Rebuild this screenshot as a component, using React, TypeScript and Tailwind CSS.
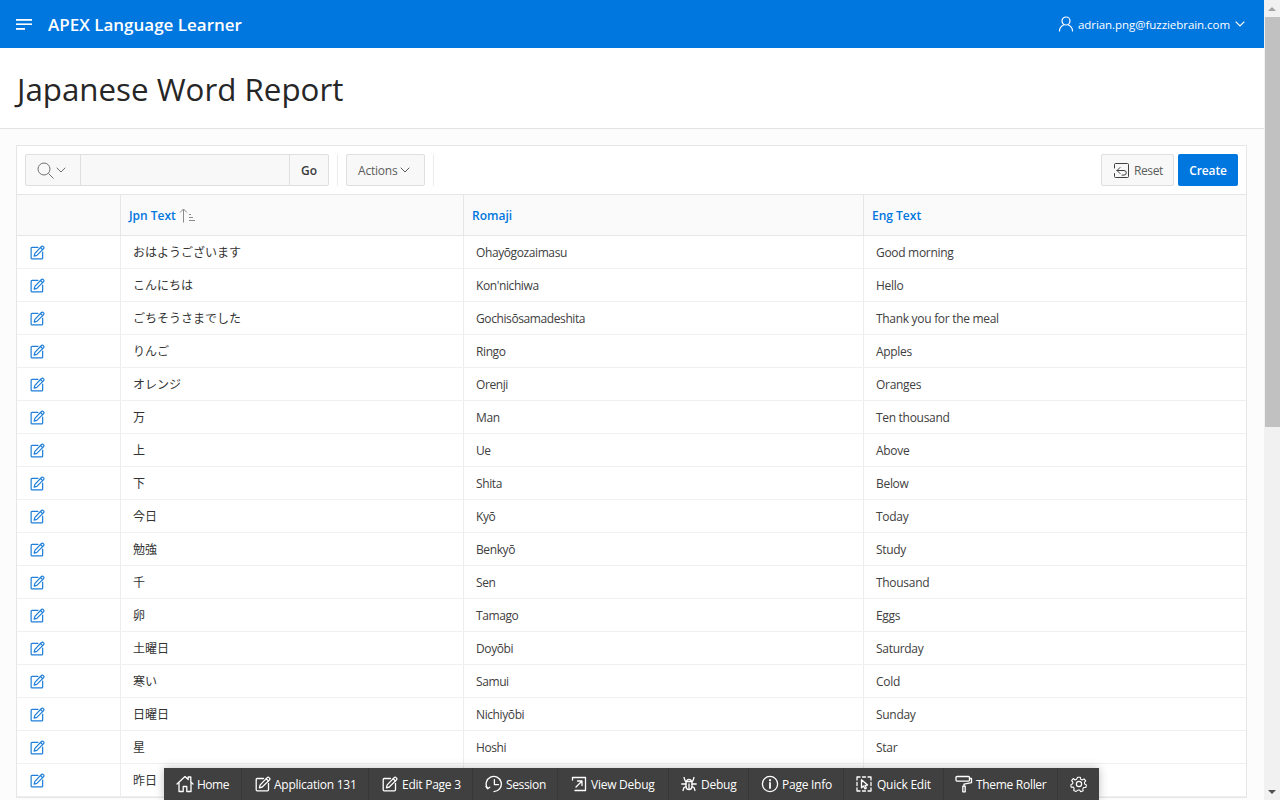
import React from "react";

const rows: [string, string, string][] = [
  ["おはようございます", "Ohayōgozaimasu", "Good morning"],
  ["こんにちは", "Kon'nichiwa", "Hello"],
  ["ごちそうさまでした", "Gochisōsamadeshita", "Thank you for the meal"],
  ["りんご", "Ringo", "Apples"],
  ["オレンジ", "Orenji", "Oranges"],
  ["万", "Man", "Ten thousand"],
  ["上", "Ue", "Above"],
  ["下", "Shita", "Below"],
  ["今日", "Kyō", "Today"],
  ["勉強", "Benkyō", "Study"],
  ["千", "Sen", "Thousand"],
  ["卵", "Tamago", "Eggs"],
  ["土曜日", "Doyōbi", "Saturday"],
  ["寒い", "Samui", "Cold"],
  ["日曜日", "Nichiyōbi", "Sunday"],
  ["星", "Hoshi", "Star"],
  ["昨日", "", ""],
];

const S = { fill: "none", stroke: "currentColor", strokeLinecap: "round" as const, strokeLinejoin: "round" as const };

function EditIcon({ size = 15, sw = 1.3 }: { size?: number; sw?: number }) {
  return (
    <svg width={size} height={size} viewBox="0 0 16 16" {...S} strokeWidth={sw}>
      <path d="M8.5 2.5H2.2a1 1 0 0 0-1 1v10.3a1 1 0 0 0 1 1h10.3a1 1 0 0 0 1-1V7.5" />
      <path d="M5.2 8.9 12.2 1.6a1.3 1.3 0 0 1 1.9 0l.4.4a1.3 1.3 0 0 1 0 1.9L7.3 11l-2.9.8z" />
      <path d="M11.2 2.7l2.3 2.3" />
    </svg>
  );
}

const icons: Record<string, React.ReactNode> = {
  home: (
    <svg width="18" height="18" viewBox="0 0 18 18" {...S} strokeWidth={1.3}>
      <path d="M1 9 9 1.6l3.2 2.9V2h2.6v5L17 9" />
      <path d="M3 8v8.5h4.2v-5h3.6v5H15V8" />
    </svg>
  ),
  edit: <EditIcon size={16} sw={1.3} />,
  session: (
    <svg width="18" height="18" viewBox="0 0 18 18" {...S} strokeWidth={1.3}>
      <path d="M2.6 13.5A7.6 7.6 0 1 1 9 16.6" />
      <path d="M9.4 4.6V9.6H13.5" />
      <path d="M1 11.6l1.6 2 2.2-1.4" />
    </svg>
  ),
  view: (
    <svg width="16" height="16" viewBox="0 0 16 16" {...S} strokeWidth={1.3}>
      <path d="M1.5 4V1.5h13v13H4" />
      <path d="M5 11 11 5M6.5 5H11v4.5" />
    </svg>
  ),
  debug: (
    <svg width="16" height="16" viewBox="0 0 16 16" {...S} strokeWidth={1.3}>
      <path d="M5 5.5h6v5a3 3 0 0 1-6 0z" />
      <path d="M5.8 5.5a2.2 2.2 0 0 1 4.4 0M8 8v5.4M3 1.5l1 3 1 1M13 1.5l-1 3-1 1M.8 8H5M15.2 8H11M2 14.5l1-3 2-.8M14 14.5l-1-3-2-.8" />
    </svg>
  ),
  info: (
    <svg width="18" height="18" viewBox="0 0 18 18" {...S} strokeWidth={1.3}>
      <circle cx="9" cy="9" r="7.6" />
      <path d="M9 8v5" strokeWidth={1.8} />
      <path d="M9 5v.6" strokeWidth={2} />
    </svg>
  ),
  quick: (
    <svg width="16" height="16" viewBox="0 0 16 16" {...S} strokeWidth={1.3}>
      <path d="M1 4V1h3M12 1h3v3M15 12v3h-3M4 15H1v-3M1 6.5v3M15 6.5v3M6.5 1h3M6.5 15h3" />
      <path d="M5.5 3.8v8l2-1.8 1.4 2.8 1.4-.7L9 9.3l2.6-.3z" />
    </svg>
  ),
  roller: (
    <svg width="18" height="18" viewBox="0 0 18 18" {...S} strokeWidth={1.3}>
      <path d="M1 3.5V2.5a1 1 0 0 1 1-1h11.5a1 1 0 0 1 1 1v2.6a1 1 0 0 1-1 1H2a1 1 0 0 1-1-1z" />
      <path d="M14.5 3.5h2v4.2L9 9.2v2" />
      <path d="M7.8 11.2h2.4v5.6H7.8z" />
    </svg>
  ),
};

const toolbar: [string, string, string, string, string][] = [
  ["Home", "home", "w-[78px]", "pl-[12px] gap-[3px]", "tracking-[-0.5px]"],
  ["Application 131", "edit", "w-[127px]", "pl-[13px] gap-[3px]", "tracking-[-0.25px]"],
  ["Edit Page 3", "edit", "w-[104px]", "pl-[13px] gap-[4px]", "tracking-[-0.25px]"],
  ["Session", "session", "w-[85px]", "pl-[12px] gap-[3px]", "tracking-[-0.35px]"],
  ["View Debug", "view", "w-[111px]", "pl-[13px] gap-[4px]", "tracking-[-0.25px]"],
  ["Debug", "debug", "w-[80px]", "pl-[12px] gap-[4px]", "tracking-[-0.25px]"],
  ["Page Info", "info", "w-[95px]", "pl-[12px] gap-[3px]", "tracking-[-0.25px]"],
  ["Quick Edit", "quick", "w-[100px]", "pl-[12px] gap-[5px]", "tracking-[-0.25px]"],
  ["Theme Roller", "roller", "w-[114px]", "pl-[11px] gap-[3px]", "tracking-[-0.3px]"],
];

export default function App() {
  return (
    <div className="flex h-screen w-[1280px] overflow-hidden bg-white text-[#262626] font-['Open_Sans','Noto_Sans_CJK_JP',sans-serif]">
      <div className="relative flex w-[1264px] flex-col overflow-hidden">
        <header className="flex h-12 shrink-0 items-center bg-[#0076df] text-white">
          <svg className="ml-4" width="16" height="12" viewBox="0 0 16 12" fill="currentColor">
            <rect x="0" y="1" width="16" height="1.8" />
            <rect x="0" y="5.4" width="16" height="1.6" />
            <rect x="0" y="10" width="9" height="1.8" />
          </svg>
          <span className="ml-4 pt-[2px] text-[17px] font-semibold">APEX Language Learner</span>
          <div className="ml-auto flex items-center pr-[19px] text-[11.5px]">
            <svg width="16" height="16" viewBox="0 0 16 16" fill="none" stroke="currentColor" strokeWidth="1.2">
              <circle cx="8" cy="5" r="4" />
              <path d="M1.5 15c0-3.5 2-5 4-6M14.5 15c0-3.5-2-5-4-6" strokeLinecap="round" />
            </svg>
            <span className="ml-[4px] pt-[2px] tracking-[-0.05px]">adrian.png@fuzziebrain.com</span>
            <svg className="ml-[5px]" width="10" height="6" viewBox="0 0 10 6" fill="none" stroke="currentColor" strokeWidth="1.2">
              <path d="M.7.7 5 5 9.3.7" />
            </svg>
          </div>
        </header>

        <div className="flex h-[81px] shrink-0 items-center border-b border-[#e3e3e3] pl-[17px]">
          <h1 className="mt-1 text-[31.3px] font-normal leading-none">Japanese Word Report</h1>
        </div>

        <main className="flex-1 bg-[#fcfcfc] pl-4 pr-[17px] pt-4">
          <div className="border border-[#e6e6e6] bg-white">
            <div className="flex h-[49px] items-center border-b border-[#e6e6e6] bg-white px-2">
              <div className="flex h-8 w-[304px] rounded-[2px] border border-[#dfdfdf] bg-[#f8f8f8]">
                <div className="flex w-[55px] items-center gap-[2px] border-r border-[#dfdfdf] pl-[11px] text-[#707070]">
                  <svg width="17" height="17" viewBox="0 0 17 17" fill="none" stroke="currentColor" strokeWidth="1">
                    <circle cx="7" cy="7" r="6" />
                    <path d="m11.5 11.5 5 5" />
                  </svg>
                  <svg width="10" height="6" viewBox="0 0 10 6" fill="none" stroke="currentColor" strokeWidth="1">
                    <path d="M.7.7 5 5 9.3.7" />
                  </svg>
                </div>
                <div className="flex-1" />
                <div className="flex w-[39px] items-center justify-center border-l border-[#dfdfdf] pt-[1px] text-[12px] font-semibold text-[#3a3a3a]">Go</div>
              </div>
              <div className="mx-2 h-8 w-px bg-[#ececec]" />
              <div className="flex h-8 w-[79px] items-center gap-[2px] rounded-[2px] border border-[#dfdfdf] bg-[#f8f8f8] pl-[11px] text-[12px] tracking-[-0.2px] text-[#5c5c5c]">
                <span className="pt-[2px]">Actions</span>
                <svg width="10" height="6" viewBox="0 0 10 6" fill="none" stroke="currentColor" strokeWidth="1">
                  <path d="M.7.7 5 5 9.3.7" />
                </svg>
              </div>
              <div className="mx-2 h-8 w-px bg-[#ececec]" />
              <div className="ml-auto flex h-8 w-[73px] items-center gap-[5px] rounded-[2px] border border-[#dfdfdf] bg-[#f8f8f8] pl-3 text-[12px] tracking-[-0.4px] text-[#5c5c5c]">
                <svg width="15" height="15" viewBox="0 0 15 15" fill="none" stroke="#404040" strokeWidth="1" strokeLinecap="round" strokeLinejoin="round">
                  <path d="M.5 5V1.5a1 1 0 0 1 1-1h12a1 1 0 0 1 1 1v12a1 1 0 0 1-1 1h-12a1 1 0 0 1-1-1V10.5" />
                  <path d="M6 4.5 3 7.5l3 3M3 7.5h7a2.3 2.3 0 0 1 0 4.6H8" />
                </svg>
                <span className="pt-[2px]">Reset</span>
              </div>
              <div className="ml-1 flex h-8 w-[60px] items-center justify-center rounded-[2px] bg-[#0076df] pt-[1px] text-[12px] font-semibold tracking-[-0.1px] text-white">Create</div>
            </div>

            <div className="flex h-[41px] border-b border-[#e6e6e6] bg-[#fafafa] text-[12px] font-semibold text-[#0076df]">
              <div className="w-[104px] border-r border-[#e6e6e6]" />
              <div className="flex w-[343px] items-center border-r border-[#e6e6e6] pl-2 pt-[2px]">
                Jpn Text
                <svg className="mb-[2px] ml-[3px] text-[#8a8a8a]" width="17" height="15" viewBox="0 0 17 15" fill="none" stroke="currentColor" strokeWidth="1">
                  <path d="M4.5 14.5V1M1 4.5 4.5 1 8 4.5M10 6.5h2M10 9.5h4M10 12.5h6" />
                </svg>
              </div>
              <div className="flex w-[400px] items-center border-r border-[#e6e6e6] pl-2 pt-[2px]">Romaji</div>
              <div className="flex flex-1 items-center pl-2 pt-[2px]">Eng Text</div>
            </div>

            {rows.map((r) => (
              <div key={r[0]} className="flex h-[33px] border-b border-[#f0f0f0] text-[12px] text-[#404040]">
                <div className="flex w-[104px] items-center border-r border-[#ededed] pl-[13px] text-[#1f7fd9]">
                  <EditIcon />
                </div>
                <div className="flex w-[343px] items-center border-r border-[#ededed] pl-3 pt-[2px] text-[#333333]">{r[0]}</div>
                <div className="flex w-[400px] items-center border-r border-[#ededed] pl-3 pt-[1px] tracking-[-0.4px]">{r[1]}</div>
                <div className="flex flex-1 items-center pl-3 pt-[1px] tracking-[-0.3px]">{r[2]}</div>
              </div>
            ))}
          </div>
        </main>

        <div className="absolute bottom-0 left-[164px] flex h-8 w-[935px] bg-[#404040] text-[12px] text-white shadow-[0_0_10px_rgba(0,0,0,0.25)]">
          {toolbar.map(([label, icon, w, pad, track]) => (
            <div key={label} className={`flex shrink-0 items-center border-r border-[#383838] ${w} ${pad}`}>
              {icons[icon]}
              <span className={`whitespace-nowrap pt-[2px] ${track}`}>{label}</span>
            </div>
          ))}
          <div className="flex flex-1 items-center justify-center">
            <svg width="18" height="18" viewBox="0 0 24 24" fill="none" stroke="currentColor" strokeWidth="1.6" strokeLinejoin="round">
              <path d="M10 2h4l.6 3 2.2 1 2.7-1.6 2.5 3-2 2.3.4 2.3 2.6 1.4-.9 3.8-3-.1-1.5 1.9.6 3-3.6 1.5-1.7-2.5h-2.4L7.8 23 4.2 21.5l.6-3L3.3 16.6l-3 .1-.3-3.8 2.6-1.4.4-2.3-2-2.3 2.5-3L6.2 6l2.2-1z" transform="translate(1.2 1.2) scale(.9)" />
              <circle cx="12" cy="12" r="3.5" />
            </svg>
          </div>
        </div>
      </div>

      <div className="flex w-4 shrink-0 flex-col bg-[#f1f1f1]">
        <div className="flex h-[17px] items-center justify-center">
          <div className="h-0 w-0 border-x-4 border-b-4 border-x-transparent border-b-[#a3a3a3]" />
        </div>
        <div className="ml-[1px] h-[410px] bg-[#c1c1c1]" />
        <div className="mt-auto flex h-[17px] items-center justify-center">
          <div className="h-0 w-0 border-x-4 border-t-4 border-x-transparent border-t-[#505050]" />
        </div>
      </div>
    </div>
  );
}
